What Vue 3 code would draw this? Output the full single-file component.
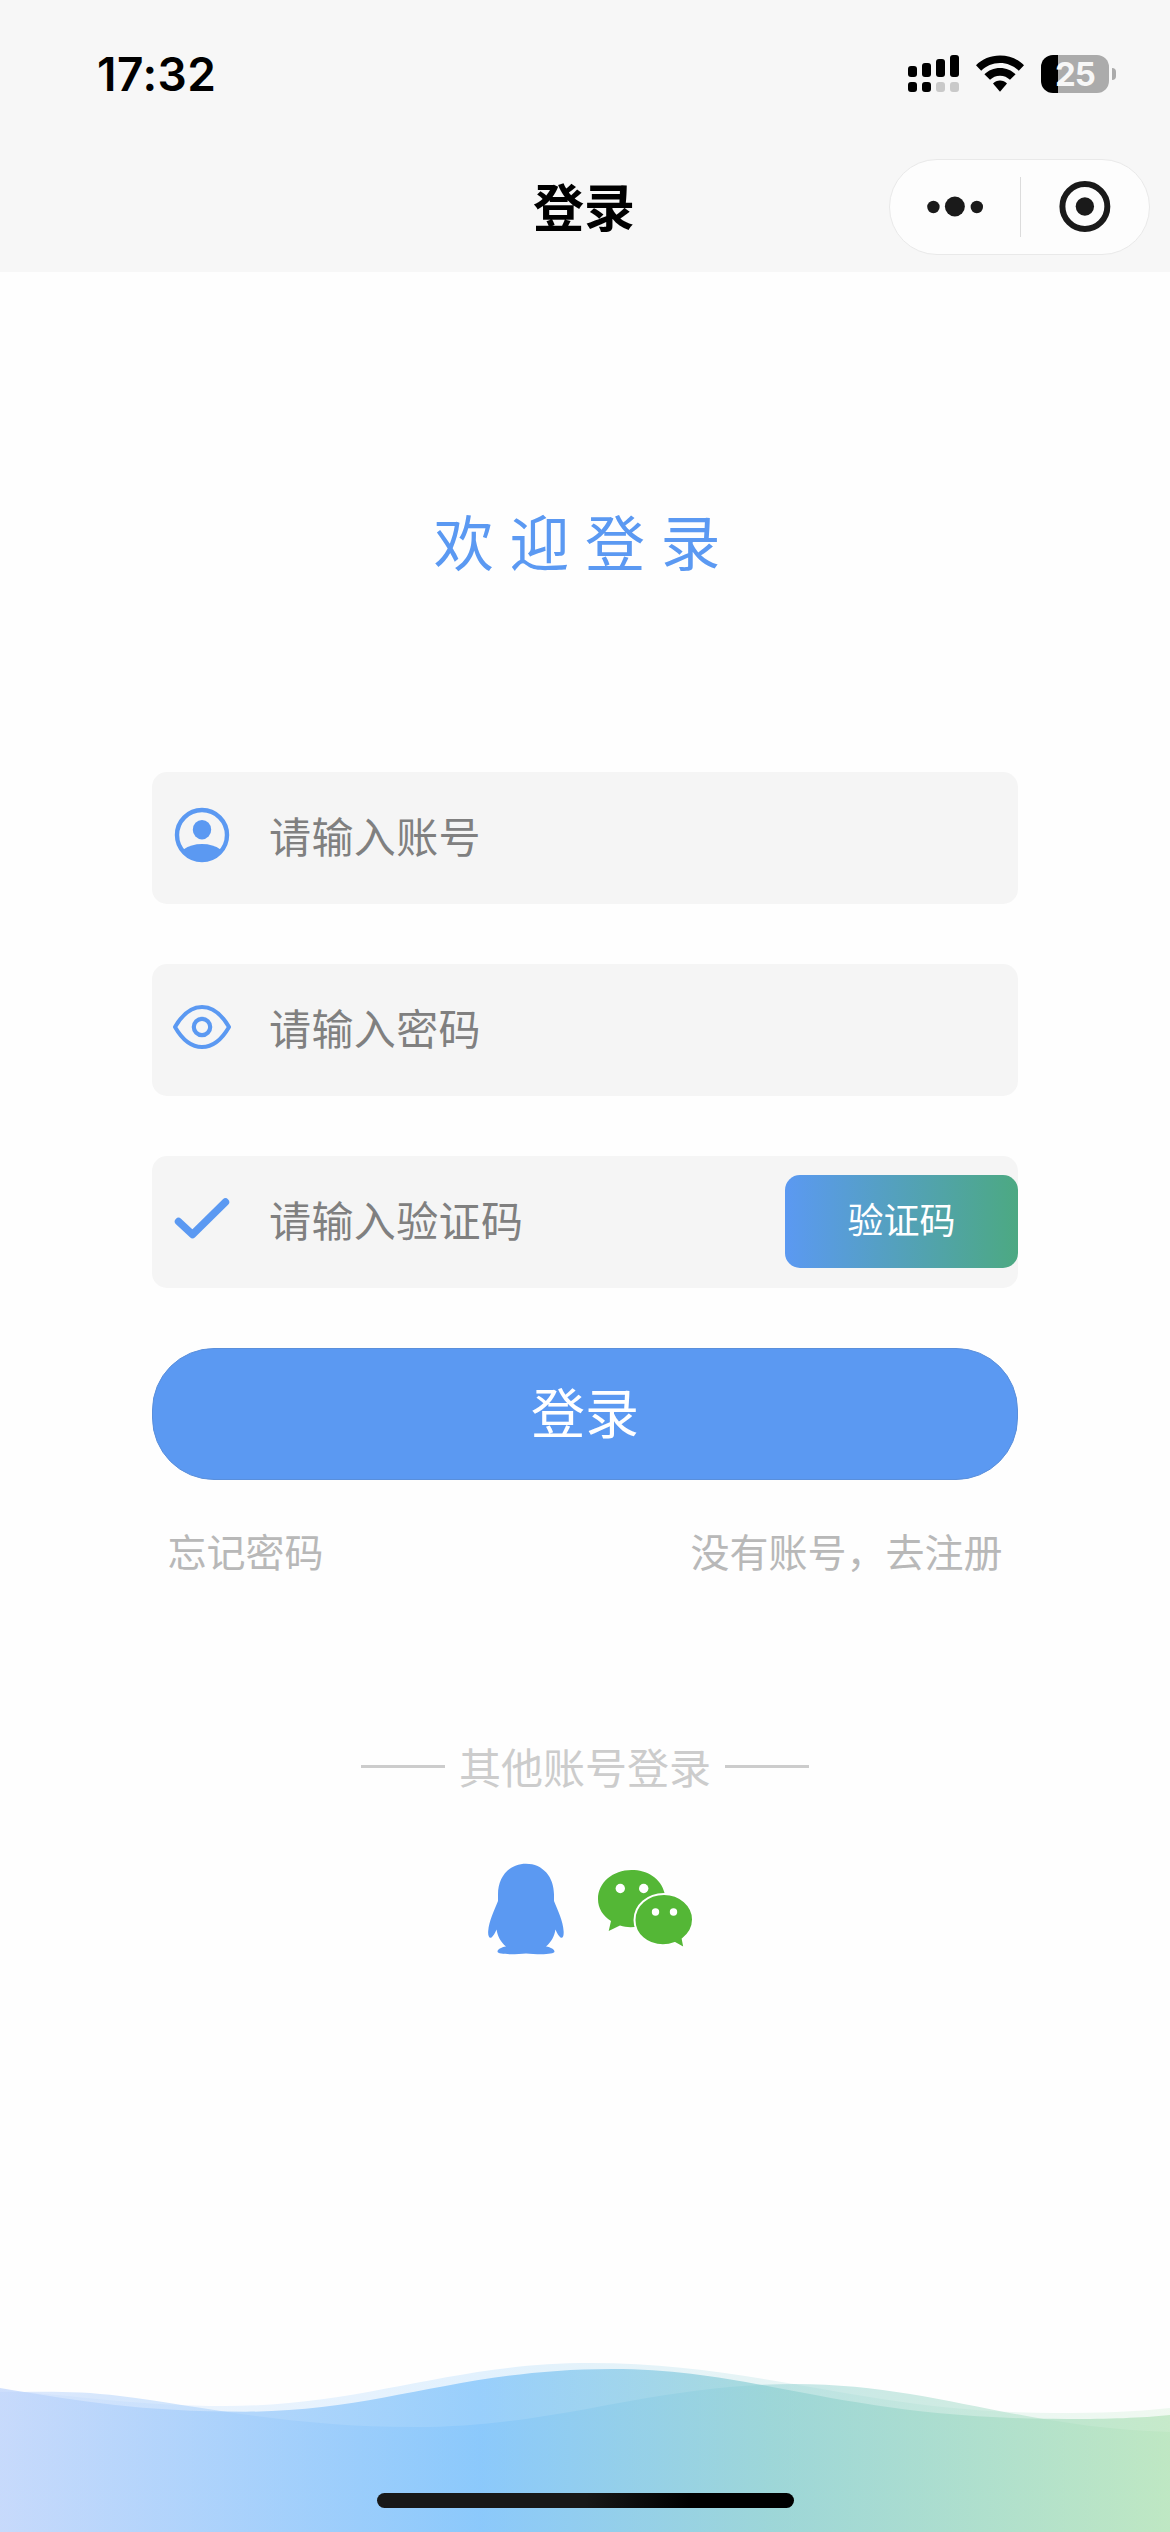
<script setup>
import { ref } from 'vue'

const account = ref('')
const password = ref('')
const code = ref('')
const bars = [
  { x: 0, y: 11, h: 11 },
  { x: 14, y: 8, h: 14 },
  { x: 28, y: 4, h: 18 },
  { x: 42, y: 0, h: 22 },
]
</script>

<template>
  <div class="page">
    <header class="top">
      <div class="status">
        <span class="time">17:32</span>
        <div class="indicators">
          <svg class="signal" width="51" height="38" viewBox="0 0 51 38">
            <g v-for="(b, i) in bars" :key="i">
              <rect :x="b.x" :y="b.y" width="9" :height="b.h" rx="3" />
              <rect :x="b.x" y="27" width="9" height="10" rx="3" :fill="i < 2 ? '#000' : '#c9c9c9'" />
            </g>
          </svg>
          <svg class="wifi" width="50" height="38" viewBox="0 0 50 38">
            <path d="M25 0.5C34.5 0.5 43 4.2 49 10.2L43.8 15.7C38.9 11 32.4 8 25 8S11.1 11 6.2 15.7L1 10.2C7 4.2 15.5 .5 25 .5Z" />
            <path d="M25 13c6.200 0 11.600 2.400 15.600 6.300L35 24.800C32.400 22.300 29 20.700 25 20.700s-7.400 1.600-10 4.100L9.400 19.300C13.400 15.400 18.800 13 25 13Z" />
            <path d="M25 25.500c2.800 0 5.200 1 7 2.900L25 36.800l-7-8.400c1.800-1.900 4.200-2.900 7-2.900Z" />
          </svg>
          <div class="battery"><span>25</span></div>
          <i class="nub"></i>
        </div>
      </div>
      <div class="nav">
        <h1>登录</h1>
        <div class="capsule">
          <svg width="130" height="94" viewBox="0 0 130 94" fill="#1a1a1a">
            <circle cx="43.500" cy="47" r="6.200" />
            <circle cx="65" cy="46.500" r="10" />
            <circle cx="87" cy="47" r="6.200" />
          </svg>
          <i></i>
          <svg width="128" height="94" viewBox="0 0 128 94">
            <circle cx="64" cy="46.500" r="22.500" fill="none" stroke="#1a1a1a" stroke-width="6" />
            <circle cx="64" cy="46.500" r="9.200" fill="#1a1a1a" />
          </svg>
        </div>
      </div>
    </header>

    <h2>欢迎登录</h2>

    <form @submit.prevent>
      <label class="field">
        <svg width="60" height="60" viewBox="0 0 60 60">
          <circle cx="30" cy="30" r="25" fill="none" stroke="#5b99f2" stroke-width="4.400" />
          <ellipse cx="30" cy="24.700" rx="9.200" ry="9.700" fill="#5b99f2" />
          <path d="M11.500 44.500Q19 39 30 39t18.500 5.500Q42 56 30 56T11.500 44.500Z" fill="#5b99f2" />
        </svg>
        <input v-model="account" placeholder="请输入账号" />
      </label>
      <label class="field">
        <svg width="60" height="60" viewBox="0 0 60 60" fill="none" stroke="#5b99f2" stroke-linejoin="round">
          <path d="M3 30Q14.500 10 30 10T57 30Q45.500 50 30 50T3 30Z" stroke-width="4" />
          <circle cx="30" cy="30" r="8.200" stroke-width="4.200" />
        </svg>
        <input v-model="password" type="password" placeholder="请输入密码" />
      </label>
      <label class="field">
        <svg width="60" height="60" viewBox="0 0 60 60">
          <path d="M6.500 32.500L20.500 45.500L53.500 13" fill="none" stroke="#5b99f2" stroke-width="7.400" stroke-linecap="round" stroke-linejoin="round" />
        </svg>
        <input v-model="code" placeholder="请输入验证码" />
        <button class="code" type="button">验证码</button>
      </label>
      <button class="login" type="submit">登录</button>
    </form>

    <div class="links">
      <a>忘记密码</a>
      <a>没有账号，去注册</a>
    </div>

    <div class="other"><i></i><span>其他账号登录</span><i></i></div>

    <div class="social">
      <svg width="78" height="92" viewBox="0 0 78 92">
        <path fill="#5b99f2" d="M39 .7C56 .7 67 14 67 31.500L67 38C71 48 76 58 76.600 68C77 73 75.700 75.800 73.500 74.500C71.500 73 70 70 68.400 66.500C67.500 73 64.500 79 59 83.500C64 84.300 67.500 86.500 67.500 88.500C67.500 92 49 91.400 39 90.400C29 91.400 10.500 92 10.500 88.500C10.500 86.500 14 84.300 19 83.500C13.500 79 10.500 73 9.600 66.500C8 70 6.500 73 4.500 74.500C2.300 75.800 .8 73 1.200 68C2 58 7 48 11 38L11 31.500C11 14 22 .7 39 .7Z" />
      </svg>
      <svg width="98" height="92" viewBox="0 0 98 92">
        <path fill="#54b736" d="M35.500 7C17 7 2 19.500 2 36C2 45.500 7 53 15 58L12.700 68L24 62.500C30 64.500 36 64.500 42 63.500C70 63 72 48 68.700 30.500C65 15 51 7 35.500 7Z" />
        <path fill="#54b736" stroke="#fff" stroke-width="2" d="M68 31C51.500 31 38.500 42.500 38.500 57C38.500 71.500 51 82.300 67 82.300C71 82.300 75 81.500 79 80L88.500 85.300L86.700 76C93 71 97 64 97 56.500C97 42.500 84 31 68 31Z" />
        <g fill="#fff"><circle cx="24.300" cy="25.500" r="4.700" /><circle cx="47.700" cy="25.500" r="4.700" /><circle cx="59.500" cy="49" r="3.700" /><circle cx="77.500" cy="49" r="3.700" /></g>
      </svg>
    </div>

    <footer>
      <svg width="1170" height="192" viewBox="0 0 1170 192">
        <defs>
          <linearGradient id="sea" gradientUnits="userSpaceOnUse" x1="0" x2="1170" y1="0" y2="0">
            <stop offset="0" stop-color="#c1d6fb" />
            <stop offset=".41" stop-color="#7fc3fb" />
            <stop offset=".66" stop-color="#93d2d4" />
            <stop offset="1" stop-color="#b8e5bd" />
          </linearGradient>
        </defs>
        <g fill="url(#sea)">
          <path opacity=".22" d="M0 50C80 56 140 66 225 66C365 66 450 23 590 23C760 23 870 73 1055 73C1100 73 1135 72 1170 68V192H0Z" />
          <path opacity=".52" d="M0 52C35 52 75 50 120 56C200 66 290 87 415 87C560 87 650 44 795 44C930 44 1020 88 1170 92V192H0Z" />
          <path opacity=".74" d="M0 48C80 61 140 71.700 246 71.700C380 71.700 460 29 612 29C760 29 840 79 1067 79C1110 79 1140 78 1170 75V192H0Z" />
        </g>
      </svg>
      <i class="home"></i>
    </footer>
  </div>
</template>

<style>
body {
  margin: 0;
  background: #fff;
}
</style>

<style scoped>
.page {
  width: 1170px;
  height: 2532px;
  display: flex;
  flex-direction: column;
  align-items: center;
  overflow: hidden;
  background: #fefefe;
  font-family: "Noto Sans CJK SC", sans-serif;
}
.top {
  width: 100%;
  height: 272px;
  background: #f7f7f7;
}
.status {
  height: 148px;
  box-sizing: border-box;
  padding: 0 54px 0 97px;
  display: flex;
  justify-content: space-between;
  align-items: center;
}
.time {
  font: 600 46px/50px Inter, sans-serif;
  letter-spacing: 0.5px;
}
.indicators {
  display: flex;
  align-items: center;
}
.signal {
  margin-right: 16px;
}
.wifi {
  margin-right: 16px;
}
.battery {
  width: 68px;
  height: 38px;
  border-radius: 12px;
  background: linear-gradient(90deg, #000 17px, #ababab 17px);
  color: #f7f7f7;
  font: 700 33px/38px Inter, sans-serif;
  letter-spacing: -1px;
  text-align: center;
}
.nub {
  width: 4px;
  height: 12px;
  margin-left: 3px;
  border-radius: 0 5px 5px 0;
  background: #ababab;
}
.nav {
  height: 124px;
  padding: 0 20px 0 533px;
  display: flex;
  justify-content: space-between;
  align-items: flex-start;
}
h1 {
  margin: 19px 0 0;
  font-size: 51px;
  line-height: 76px;
  font-weight: 700;
}
.capsule {
  width: 259px;
  height: 94px;
  margin-top: 11px;
  border: 1px solid #e9e9e9;
  border-radius: 48px;
  background: #fdfdfd;
  display: flex;
  align-items: center;
}
.capsule i {
  width: 1.5px;
  height: 60px;
  background: #dcdcdc;
}
h2 {
  margin: 223px 0 0;
  font-size: 60px;
  line-height: 90px;
  font-weight: 400;
  letter-spacing: 15.6px;
  color: #5b99f2;
}
form {
  width: 866px;
  margin-top: 187px;
  display: flex;
  flex-direction: column;
  gap: 60px;
}
.field {
  height: 132px;
  border-radius: 15px;
  background: #f5f5f5;
  display: flex;
  align-items: center;
}
.field svg {
  flex: none;
  margin: 0 37px 7px 20px;
}
input {
  flex: 1;
  min-width: 0;
  height: 70px;
  margin-bottom: 6px;
  padding: 0;
  border: 0;
  outline: 0;
  background: none;
  font: 42px/70px "Noto Sans CJK SC", sans-serif;
  letter-spacing: 0.4px;
}
input::placeholder {
  color: #808080;
  opacity: 1;
}
button {
  padding: 0;
  font-family: inherit;
  color: #fff;
}
.code {
  width: 233px;
  height: 93px;
  margin-bottom: 2px;
  padding-bottom: 7px;
  border: 0;
  border-radius: 15px;
  background: linear-gradient(90deg, #5b99f2, #4ca982);
  font-size: 36px;
}
.login {
  height: 132px;
  padding-bottom: 7px;
  border: 1px solid #5a8fdb;
  border-radius: 62px;
  background: #5b99f2;
  font-size: 54px;
}
.links {
  width: 835px;
  margin-top: 41px;
  display: flex;
  justify-content: space-between;
  font-size: 39px;
  line-height: 58px;
  color: #b8b8b8;
}
.other {
  margin-top: 156px;
  display: flex;
  align-items: center;
  gap: 14px;
  font-size: 42px;
  line-height: 62px;
  color: #ccc;
}
.other i {
  width: 84px;
  height: 3px;
  background: #ccc;
}
.social {
  width: 197px;
  margin-top: 66px;
  display: flex;
  gap: 31px;
}
.social svg {
  flex: none;
}
footer {
  position: relative;
  width: 100%;
  height: 192px;
  margin-top: auto;
}
.home {
  position: absolute;
  left: 377px;
  bottom: 24px;
  width: 417px;
  height: 15px;
  border-radius: 8px;
  background: linear-gradient(90deg, #181818 50%, #000 75%);
}
</style>
